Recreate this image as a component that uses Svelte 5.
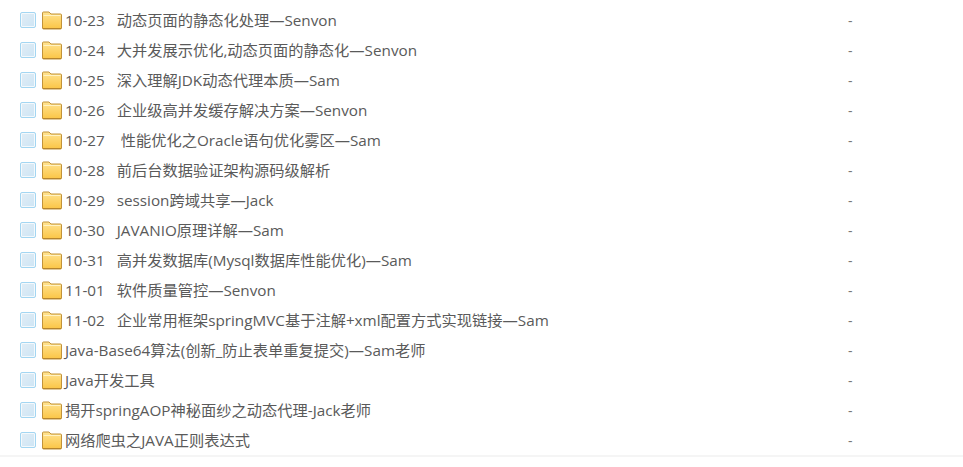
<script>
  const rows = [
    "",
    "10-23   动态页面的静态化处理—Senvon",
    "10-24   大并发展示优化,动态页面的静态化—Senvon",
    "10-25   深入理解JDK动态代理本质—Sam",
    "10-26   企业级高并发缓存解决方案—Senvon",
    "10-27    性能优化之Oracle语句优化雾区—Sam",
    "10-28   前后台数据验证架构源码级解析",
    "10-29   session跨域共享—Jack",
    "10-30   JAVANIO原理详解—Sam",
    "10-31   高并发数据库(Mysql数据库性能优化)—Sam",
    "11-01   软件质量管控—Senvon",
    "11-02   企业常用框架springMVC基于注解+xml配置方式实现链接—Sam",
    "Java-Base64算法(创新_防止表单重复提交)—Sam老师",
    "Java开发工具",
    "揭开springAOP神秘面纱之动态代理-Jack老师",
    "网络爬虫之JAVA正则表达式"
  ];
</script>

{#snippet folder()}
  <svg class="folder" width="20" height="19" viewBox="0 0 20 19">
    <defs>
      <linearGradient id="fill" x1="0" y1="0" x2="0" y2="1">
        <stop offset="0" stop-color="#ffe391" />
        <stop offset="1" stop-color="#fbc545" />
      </linearGradient>
    </defs>
    <path d="M0.5 17V2q0-1 1-1h5.5l2 2h9.5q1 0 1 1v13q0 1-1 1H1.5q-1 0-1-1z" fill="url(#fill)" stroke="#c2933a" />
    <path d="M1.5 4.5h17" stroke="#fff2c4" />
    <path d="M1 17.5h18" stroke="#b5842c" />
  </svg>
{/snippet}

<div class="list">
  {#each rows as name}
    <div class="row">
      <span class="check"></span>
      {@render folder()}
      <span class="name">{name}</span>
      {#if name}
        <span class="size">-</span>
      {/if}
    </div>
  {/each}
</div>

<style>
  :global(body) {
    background: #fff;
    overflow: hidden;
  }
  .list {
    margin-top: -25px;
    width: 963px;
    border-bottom: 2px solid #f5f5f5;
    font-family: "Open Sans", "Noto Sans CJK SC", sans-serif;
  }
  .row {
    display: flex;
    align-items: center;
    height: 30px;
    padding-left: 20px;
  }
  .check {
    flex: none;
    width: 14px;
    height: 14px;
    border: 1px solid #a3d6f2;
    border-radius: 2px;
    background: linear-gradient(135deg, #e2edf5, #cde5f5);
    box-shadow: inset 0 0 0 1px #f4f9fc;
    margin-right: 6px;
  }
  .folder {
    flex: none;
    margin-right: 3px;
    margin-top: 1px;
  }
  .name {
    width: 783px;
    font-size: 15.25px;
    line-height: 20px;
    color: #5a5a5a;
    white-space: pre;
  }
  .size {
    font-size: 14px;
    color: #777;
  }
</style>
